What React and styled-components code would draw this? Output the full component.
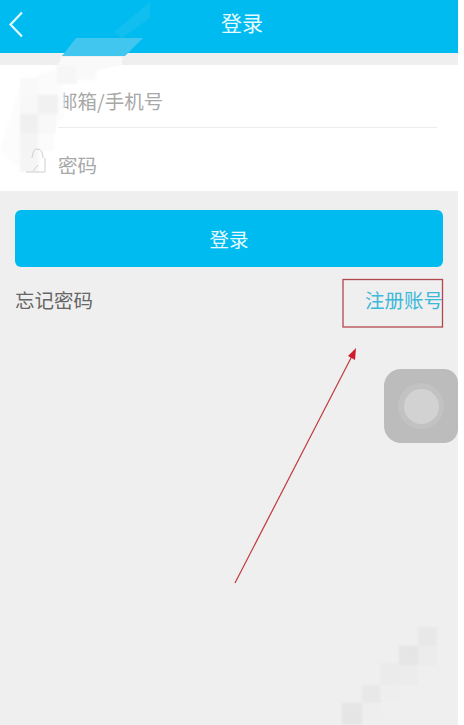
import React from "react";
import styled, { createGlobalStyle } from "styled-components";

const Global = createGlobalStyle`
  html, body { margin: 0; padding: 0; background: #fff; }
  body { font-family: "Liberation Sans", "Noto Sans CJK SC", sans-serif; }
`;

const Page = styled.div`
  position: relative;
  width: 458px;
  height: 725px;
  overflow: hidden;
  background: #efefef;
`;

const Header = styled.header`
  height: 53px;
  background: #00bbef;
  display: flex;
  align-items: center;
  justify-content: center;
  padding: 0 0 9px 26px;
  box-sizing: border-box;
  position: relative;
`;

const Title = styled.h1`
  margin: 0;
  font-size: 21px;
  line-height: 30px;
  font-weight: 400;
  color: #e6fbff;
  font-family: "Noto Sans CJK SC", sans-serif;
`;

const Back = styled.svg`
  position: absolute;
  left: 8px;
  top: 11px;
  width: 16px;
  height: 27px;
`;

const Form = styled.section`
  margin-top: 12px;
  background: #fff;
  height: 126px;
  display: flex;
  flex-direction: column;
`;

const Field = styled.div`
  height: 63px;
  margin-right: 21px;
  margin-left: 58px;
  padding-top: 9px;
  display: flex;
  align-items: center;
  font-family: "Noto Sans CJK SC", sans-serif;
  font-size: 19.5px;
  color: #a8a8a8;
  box-sizing: border-box;
  border-bottom: ${(p) => (p.$divider ? "1.5px solid #ececec" : "none")};
`;

const Submit = styled.button`
  display: block;
  margin: 19px 15px 0;
  width: 428px;
  height: 57px;
  border: none;
  border-radius: 6px;
  background: #00bbef;
  color: #e6fbff;
  font-family: "Noto Sans CJK SC", sans-serif;
  font-size: 19.5px;
  padding: 0;
`;

const Links = styled.div`
  display: flex;
  justify-content: space-between;
  margin: 21px 15px 0 15px;
  font-family: "Noto Sans CJK SC", sans-serif;
  font-size: 19.5px;
  line-height: 24px;
`;

const Forgot = styled.span`
  color: #666;
`;

const Register = styled.span`
  color: #3db9da;
`;

const Overlay = styled.svg`
  position: absolute;
  left: 0;
  top: 0;
  width: 458px;
  height: 725px;
  pointer-events: none;
`;

const SoftGroup = styled.g`
  filter: blur(0.8px);
`;

const Floater = styled.div`
  position: absolute;
  left: 384px;
  top: 369px;
  width: 74px;
  height: 74px;
  border-radius: 17px 14px 14px 17px;
  background: #bcbcbc;
  display: flex;
  align-items: center;
  justify-content: center;
`;

const FloaterRing = styled.div`
  width: 46px;
  height: 46px;
  border-radius: 50%;
  background: #c2c2c2;
  display: flex;
  align-items: center;
  justify-content: center;
`;

const FloaterDot = styled.div`
  width: 35px;
  height: 35px;
  border-radius: 50%;
  background: #d2d2d2;
`;

const tiles = [
  [20, 78, 18, 17, "#f9f9f9"], [38, 73, 19, 22, "#fbfbfb"], [57, 66, 20, 18, "#f6f6f6"],
  [76, 64, 20, 16, "#f9f9f9"], [20, 95, 18, 19, "#f8f8f8"], [38, 95, 20, 19, "#f1f1f1"],
  [20, 114, 18, 19, "#f0f0f0"], [38, 114, 18, 19, "#f8f8f8"], [20, 133, 18, 18, "#f4f4f4"],
  [38, 133, 16, 18, "#fbfbfb"], [20, 151, 18, 21, "#f5f5f5"],
];

const mosaic = [
  [342, 703, 20, 22, "#e5e5e5"], [362, 685, 19, 18, "#e8e8e8"], [362, 703, 18, 16, "#eeeeee"],
  [380, 663, 19, 22, "#ebebeb"], [399, 646, 19, 19, "#e5e5e5"], [399, 665, 19, 20, "#ececec"],
  [418, 627, 19, 19, "#e8e8e8"], [418, 646, 19, 20, "#ececec"], [380, 685, 19, 14, "#eeeeee"],
];

export default function App() {
  return (
    <>
      <Global />
      <Page>
        <Header>
          <Back viewBox="0 0 16 27">
            <path d="M14 1.5 L2.5 13.5 L14 25.5" fill="none" stroke="#e4f9ff" strokeWidth="2.2" />
          </Back>
          <Title>登录</Title>
        </Header>
        <Form>
          <Field $divider>邮箱/手机号</Field>
          <Field>密码</Field>
        </Form>
        <Submit>登录</Submit>
        <Links>
          <Forgot>忘记密码</Forgot>
          <Register>注册账号</Register>
        </Links>
        <Overlay viewBox="0 0 458 725">
          <polygon points="62,56 76,38 143,38 125,56" fill="#40c6ef" />
          <polygon points="114,32 150,2 150,18 122,38" fill="#10bef0" />
          <polygon points="62,57 122,57 122,65 50,80" fill="#f9f9f9" />
          <SoftGroup>
            <polygon points="0,150 20,85 60,66 64,90 64,118 50,130 38,172 15,165" fill="#fcfcfc" />
            {tiles.map(([x, y, w, h, fill], i) => (
              <rect key={i} x={x} y={y} width={w} height={h} fill={fill} />
            ))}
          </SoftGroup>
          <path d="M32 158 Q33 148 38 149 Q43 150 43 158 M45 158 V172 H26 M38 165 L33 171" fill="none" stroke="#cfcfcf" strokeWidth="1" />
          <SoftGroup>
            {mosaic.map(([x, y, w, h, fill], i) => (
              <rect key={i} x={x} y={y} width={w} height={h} fill={fill} />
            ))}
          </SoftGroup>
          <rect x="343" y="279.5" width="99.5" height="47.5" fill="none" stroke="#b2474d" strokeWidth="1.3" />
          <line x1="235" y1="583" x2="352" y2="356" stroke="#c0393f" strokeWidth="1.2" />
          <polygon points="356,348 355,360 348,356" fill="#cf1c2c" />
        </Overlay>
        <Floater>
          <FloaterRing>
            <FloaterDot />
          </FloaterRing>
        </Floater>
      </Page>
    </>
  );
}
